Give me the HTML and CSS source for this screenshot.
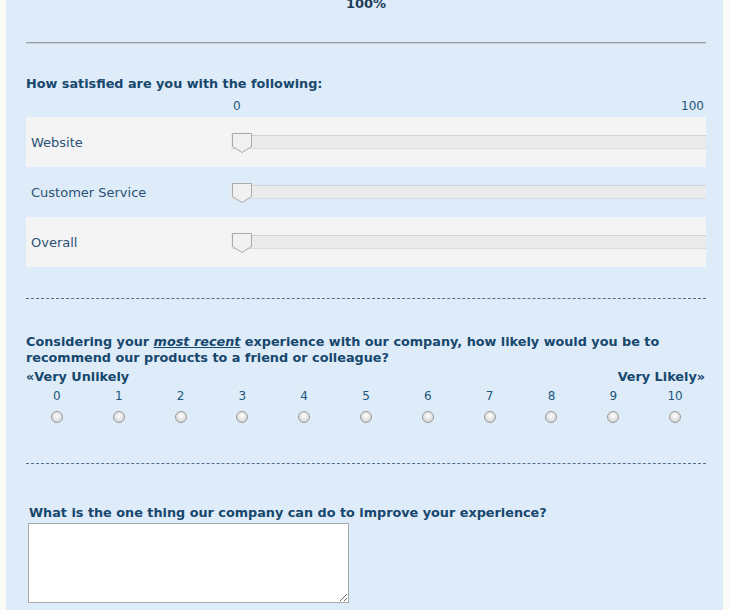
FILE: index.html
```html
<!DOCTYPE html>
<html lang="en">
  <head>
    <meta charset="UTF-8" />
    <title>Customer Survey</title>
    <link rel="stylesheet" href="styles.css">
  </head>
  <body>
    <div class="panel">
      <div class="progress">100%</div>
      <hr class="solid" />

      <div class="question">How satisfied are you with the following:</div>
      <div class="scale"><span>0</span><span>100</span></div>
      <div class="matrix">
        <div class="row shade">
          <div class="row-label">Website</div>
          <div class="track">
            <svg class="thumb" width="22" height="22" viewBox="0 0 22 22"><path d="M1.5 1.5H20.5V14.5L11 20.5L1.5 14.5Z" fill="#f1f1f1" stroke="#a9a9a9"/></svg>
          </div>
        </div>
        <div class="row">
          <div class="row-label">Customer Service</div>
          <div class="track">
            <svg class="thumb" width="22" height="22" viewBox="0 0 22 22"><path d="M1.5 1.5H20.5V14.5L11 20.5L1.5 14.5Z" fill="#f1f1f1" stroke="#a9a9a9"/></svg>
          </div>
        </div>
        <div class="row shade">
          <div class="row-label">Overall</div>
          <div class="track">
            <svg class="thumb" width="22" height="22" viewBox="0 0 22 22"><path d="M1.5 1.5H20.5V14.5L11 20.5L1.5 14.5Z" fill="#f1f1f1" stroke="#a9a9a9"/></svg>
          </div>
        </div>
      </div>

      <hr class="dashed first" />

      <div class="question nps-q">Considering your <em>most recent</em> experience with our company, how likely would you be to recommend our products to a friend or colleague?</div>
      <div class="ends"><span>&laquo;Very Unlikely</span><span>Very Likely&raquo;</span></div>
      <div class="nps">
        <label><span>0</span><input type="radio" name="nps" /></label>
        <label><span>1</span><input type="radio" name="nps" /></label>
        <label><span>2</span><input type="radio" name="nps" /></label>
        <label><span>3</span><input type="radio" name="nps" /></label>
        <label><span>4</span><input type="radio" name="nps" /></label>
        <label><span>5</span><input type="radio" name="nps" /></label>
        <label><span>6</span><input type="radio" name="nps" /></label>
        <label><span>7</span><input type="radio" name="nps" /></label>
        <label><span>8</span><input type="radio" name="nps" /></label>
        <label><span>9</span><input type="radio" name="nps" /></label>
        <label><span>10</span><input type="radio" name="nps" /></label>
      </div>

      <hr class="dashed second" />

      <div class="question open-q">What is the one thing our company can do to improve your experience?</div>
      <textarea class="answer"></textarea>
    </div>
  </body>
</html>
```

FILE: styles.css
```css
body {
  margin: 0;
  background: #fbfbf5;
  font-family: "DejaVu Sans", sans-serif;
  overflow: hidden;
}

.panel {
  margin-left: 6px;
  width: 680px;
  height: 640px;
  padding: 0 17px 0 20px;
  background: #deebf9;
}

.progress {
  margin-top: -4px;
  text-align: center;
  font-weight: bold;
  font-size: 13px;
  line-height: 16px;
  color: #1c3c58;
}

hr {
  margin: 0;
  border: 0;
}

hr.solid {
  margin-top: 30px;
  border-top: 1px solid #9c9c9c;
  height: 1px;
  background: #c9d3dd;
}

hr.dashed {
  border-top: 1px dashed #4f6f8c;
}

hr.first {
  margin-top: 31px;
}

hr.second {
  margin-top: 40px;
}

.question {
  font-weight: bold;
  font-size: 12.8px;
  line-height: 16px;
  color: #16476c;
  margin-top: 32px;
}

.question em {
  text-decoration: underline;
}

.nps-q {
  margin-top: 35px;
  padding-right: 30px;
}

.open-q {
  margin-top: 41px;
  padding-left: 3px;
}

.scale {
  display: flex;
  justify-content: space-between;
  margin-top: 6px;
  padding: 0 2px 0 207px;
  font-size: 12px;
  line-height: 16px;
  color: #21577a;
}

.matrix {
  margin-top: 3px;
}

.row {
  display: flex;
  align-items: center;
  height: 50px;
}

.row.shade {
  background: #f4f4f4;
}

.row-label {
  width: 200px;
  padding-left: 5px;
  font-size: 13px;
  color: #2b5274;
}

.track {
  position: relative;
  flex: 1;
  height: 12px;
  background: #ebebeb;
  border-top: 1px solid #d2d2d2;
  border-bottom: 1px solid #dcdcdc;
}

.thumb {
  position: absolute;
  left: 0;
  top: -4px;
}

.ends {
  display: flex;
  justify-content: space-between;
  margin-top: 3px;
  padding-right: 1px;
  font-weight: bold;
  font-size: 12.8px;
  line-height: 16px;
  color: #16476c;
}

.nps {
  display: grid;
  grid-template-columns: repeat(11, 1fr);
  margin-top: 3px;
}

.nps label {
  display: flex;
  flex-direction: column;
  align-items: center;
  gap: 7px;
  font-size: 12px;
  line-height: 16px;
  color: #21577a;
}

.nps input {
  appearance: none;
  margin: 0;
  width: 12px;
  height: 12px;
  border: 1px solid #9a9a9a;
  border-radius: 50%;
  background: radial-gradient(circle at 50% 40%, #ffffff 0, #e6e6e6 45%, #c8c8c8 100%);
}

.answer {
  display: block;
  margin: 2px 0 0 2px;
  width: 321px;
  height: 80px;
  box-sizing: border-box;
  border: 1px solid #a8a8a8;
  background: #fff;
}
```
